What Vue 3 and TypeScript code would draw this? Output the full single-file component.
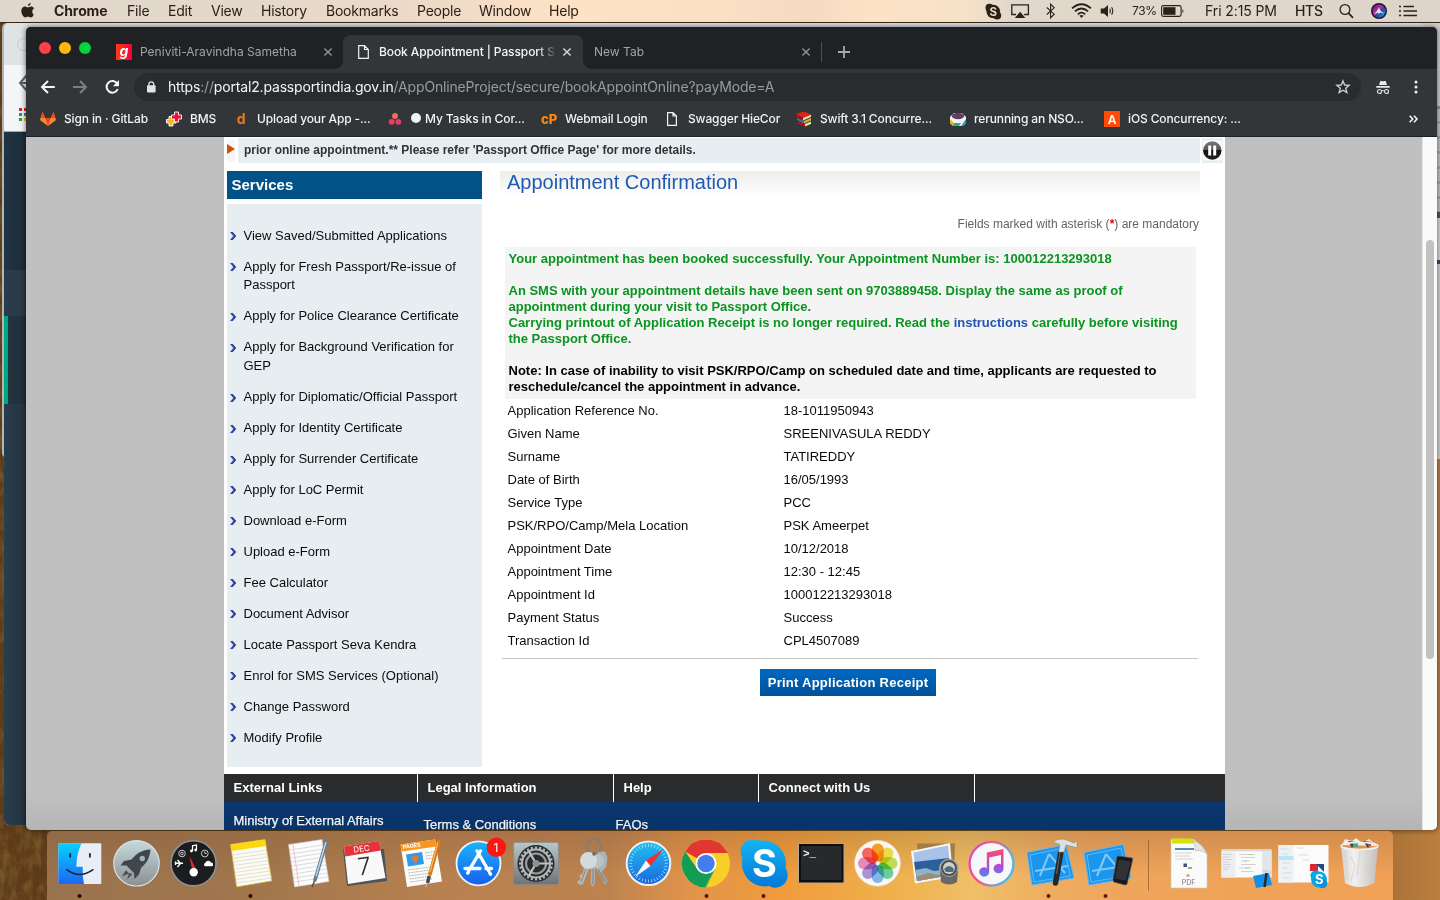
<script setup lang="ts">
interface Bookmark { icon: string; label: string }

const menus: string[] = ['Chrome', 'File', 'Edit', 'View', 'History', 'Bookmarks', 'People', 'Window', 'Help']

const bookmarks: Bookmark[] = [
  { icon: 'gitlab', label: 'Sign in · GitLab' },
  { icon: 'bms', label: 'BMS' },
  { icon: 'd', label: 'Upload your App -...' },
  { icon: 'asana', label: 'My Tasks in Cor...' },
  { icon: 'cp', label: 'Webmail Login' },
  { icon: 'doc', label: 'Swagger HieCor' },
  { icon: 'books', label: 'Swift 3.1 Concurre...' },
  { icon: 'slack', label: 'rerunning an NSO...' },
  { icon: 'a', label: 'iOS Concurrency: ...' },
]

const services: string[] = [
  'View Saved/Submitted Applications',
  'Apply for Fresh Passport/Re-issue of Passport',
  'Apply for Police Clearance Certificate',
  'Apply for Background Verification for GEP',
  'Apply for Diplomatic/Official Passport',
  'Apply for Identity Certificate',
  'Apply for Surrender Certificate',
  'Apply for LoC Permit',
  'Download e-Form',
  'Upload e-Form',
  'Fee Calculator',
  'Document Advisor',
  'Locate Passport Seva Kendra',
  'Enrol for SMS Services (Optional)',
  'Change Password',
  'Modify Profile',
]

const details: [string, string][] = [
  ['Application Reference No.', '18-1011950943'],
  ['Given Name', 'SREENIVASULA REDDY'],
  ['Surname', 'TATIREDDY'],
  ['Date of Birth', '16/05/1993'],
  ['Service Type', 'PCC'],
  ['PSK/RPO/Camp/Mela Location', 'PSK Ameerpet'],
  ['Appointment Date', '10/12/2018'],
  ['Appointment Time', '12:30 - 12:45'],
  ['Appointment Id', '100012213293018'],
  ['Payment Status', 'Success'],
  ['Transaction Id', 'CPL4507089'],
]

const petals = [
  { a: 0, c: '#ff9a12' }, { a: 45, c: '#f2dc3c' }, { a: 90, c: '#bfe046' }, { a: 135, c: '#5fcf9a' },
  { a: 180, c: '#79b8ee' }, { a: 225, c: '#a98fe0' }, { a: 270, c: '#e887c4' }, { a: 315, c: '#ff5c50' },
]
const spokes = Array.from({ length: 24 }, (_, i) => i * 15)
const ticks = Array.from({ length: 36 }, (_, i) => i * 10)
const rules = Array.from({ length: 9 }, (_, i) => i)
</script>

<template>
  <div class="desktop">
    <svg class="wallpaper" width="1440" height="900">
      <defs>
        <linearGradient id="wall" x1="0" x2="1" y1="0" y2="0">
          <stop offset="0" stop-color="#5d3a18" /><stop offset=".1" stop-color="#5d3a18" />
          <stop offset=".9" stop-color="#8a5a2a" /><stop offset="1" stop-color="#bb7f3e" />
        </linearGradient>
        <filter id="grass" x="0" y="0" width="1" height="1">
          <feTurbulence type="fractalNoise" baseFrequency=".12 .06" numOctaves="4" seed="4" />
          <feColorMatrix values="0 0 0 0 .18  0 0 0 0 .09  0 0 0 0 .02  2.6 0 0 0 -1" />
        </filter>
      </defs>
      <rect width="1440" height="900" fill="url(#wall)" />
      <rect width="60" height="900" filter="url(#grass)" />
    </svg>

    <!-- windows stacked behind the browser -->
    <div class="back-far"></div>
    <div class="back-right">
      <i class="r1"></i><i class="r2"></i><i class="r3"></i><i class="r4"></i><i class="r5"></i><i class="r6"></i>
    </div>
    <div class="back-left">
      <div class="bl-title"><span class="bl-light"></span></div>
      <div class="bl-tools">
        <svg width="22" height="67" viewBox="0 0 22 67">
          <path d="M23 10 L16 18 L23 26 M17 18H23" fill="none" stroke="#5b6066" stroke-width="2" />
          <g>
            <rect x="15" y="43" width="3" height="3" fill="#d8252a" /><rect x="20" y="43" width="3" height="3" fill="#d8252a" />
            <rect x="15" y="48" width="3" height="3" fill="#1f9a55" /><rect x="20" y="48" width="3" height="3" fill="#2f7be0" />
            <rect x="15" y="53" width="3" height="3" fill="#1f9a55" /><rect x="20" y="53" width="3" height="3" fill="#f3b717" />
          </g>
        </svg>
      </div>
      <div class="bl-s1"></div><div class="bl-s2"></div><div class="bl-s3"></div><div class="bl-s4"></div>
    </div>

    <header class="menubar">
      <nav class="menus">
        <svg class="apple" width="14" height="17" viewBox="0 0 14 17"><path d="M9.600 1c.1 1.600-1.100 3-2.700 3.100C6.800 2.600 8.100 1.200 9.600 1ZM12.700 12.400c-.7 1.600-1.600 3.100-2.900 3.100-1.100 0-1.500-.7-2.800-.7s-1.700.7-2.700.7C2.600 15.500.3 12 .3 9.100.3 6.200 2.100 4.600 4 4.600c1.200 0 2.100.8 2.900.8.700 0 1.900-.8 3.300-.8 1 0 2.200.6 2.900 1.600-2.500 1.500-2.200 5.100-.4 6.200Z" fill="#2c2017" /></svg>
        <span v-for="(m, i) in menus" :key="m" :class="['menu', { app: i === 0 }]">{{ m }}</span>
      </nav>
      <div class="status">
        <svg width="17" height="17" viewBox="0 0 17 17"><circle cx="8.300" cy="8.500" r="6.800" fill="#2c2017" /><circle cx="4.500" cy="4.700" r="4" fill="#2c2017" /><circle cx="12.200" cy="12.400" r="4" fill="#2c2017" /><text x="8.300" y="12.500" font-size="11.500" font-weight="700" text-anchor="middle" fill="#e5d9cb">S</text></svg>
        <svg width="19" height="16" viewBox="0 0 19 16"><path d="M5 11.500H.8V1.800H17.400V11.500H13.200" fill="none" stroke="#2c2017" stroke-width="1.300" /><path d="M3.800 15 9.100 8.800 14.400 15Z" fill="#2c2017" /></svg>
        <svg width="10" height="16" viewBox="0 0 10 16"><path d="M.8 4.500 8.200 11.200 4.600 14.800V1.200L8.200 4.800.8 11.500" fill="none" stroke="#2c2017" stroke-width="1.100" /></svg>
        <svg width="21" height="16" viewBox="0 0 21 16"><g fill="none" stroke="#2c2017" stroke-width="1.800"><path d="M1 5.400Q10.500-3 20 5.400" /><path d="M3.900 8.400Q10.500 2.500 17.100 8.400" /><path d="M6.800 11.300Q10.500 8 14.200 11.300" /></g><path d="M8.400 12.700Q10.500 11.300 12.600 12.700L10.500 15Z" fill="#2c2017" /></svg>
        <svg width="15" height="14" viewBox="0 0 15 14"><path d="M.7 4.500H4L8 1V13L4 9.500H.7Z" fill="#2c2017" /><path d="M9.800 4.800Q11 7 9.800 9.200M11.600 3.200Q13.900 7 11.600 10.800" fill="none" stroke="#2c2017" stroke-width="1.100" /></svg>
        <span class="pct">73%</span>
        <svg width="24" height="12" viewBox="0 0 24 12"><rect x=".6" y=".6" width="19.500" height="10.800" rx="1.800" fill="none" stroke="#2c2017" stroke-width="1.100" /><rect x="2.200" y="2.200" width="12.300" height="7.600" fill="#2c2017" /><path d="M21.500 4Q23.500 6 21.500 8Z" fill="#2c2017" /></svg>
        <span class="clock">Fri 2:15 PM</span>
        <span class="user">HTS</span>
        <svg width="15" height="16" viewBox="0 0 15 16"><circle cx="6" cy="6.500" r="4.900" fill="none" stroke="#2c2017" stroke-width="1.300" /><path d="M9.500 10.200 14 14.800" stroke="#2c2017" stroke-width="1.700" /></svg>
        <svg width="16" height="16" viewBox="0 0 16 16"><defs><linearGradient id="siri" x1="0" x2="1" y1="0" y2="1"><stop offset="0" stop-color="#3b1f78" /><stop offset=".4" stop-color="#c42b94" /><stop offset=".6" stop-color="#2848a8" /><stop offset="1" stop-color="#1dbccb" /></linearGradient></defs><circle cx="8" cy="8" r="8" fill="#1b1838" /><circle cx="8" cy="8" r="6.500" fill="url(#siri)" /><path d="M8 4.500 9.300 7.500 13.500 11 9.300 9.500 7.800 11 7 9.500 3 11.500 6 8Z" fill="#d6ecff" /></svg>
        <svg width="19" height="14" viewBox="0 0 19 14"><path d="M0 2.500H2M4.500 2.500H15M0 7H2M4.500 7H18M0 11.500H2M4.500 11.500H18" stroke="#2c2017" stroke-width="1.700" /></svg>
      </div>
    </header>

    <section class="browser">
      <div class="tabstrip">
        <div class="lights"><i class="red"></i><i class="yellow"></i><i class="green"></i></div>
        <div class="tab tab-first">
          <svg width="16" height="16" viewBox="0 0 16 16"><defs><linearGradient id="gaana" x1="0" x2="1"><stop offset="0" stop-color="#ff3a10" /><stop offset="1" stop-color="#f4003f" /></linearGradient></defs><rect width="16" height="16" fill="url(#gaana)" /><text x="8" y="11.500" font-size="14" font-weight="700" font-style="italic" text-anchor="middle" fill="#fff">g</text></svg>
          <span class="title">Peniviti-Aravindha Sametha</span>
          <svg class="close" width="8" height="8" viewBox="0 0 8 8"><path d="M.4.4 7.600 7.600M7.600.4.4 7.600" stroke="#909497" stroke-width="1.400" /></svg>
        </div>
        <div class="tab tab-active">
          <svg width="11" height="14" viewBox="0 0 11 14"><path d="M.7.700H6.500L10.300 4.500V13.300H.7ZM6.500.7V4.500H10.300" fill="none" stroke="#f1f3f4" stroke-width="1.200" /></svg>
          <span class="title active-title">Book Appointment | Passport S</span>
          <svg class="close" width="8" height="8" viewBox="0 0 8 8"><path d="M.4.400 7.600 7.600M7.600.4.4 7.600" stroke="#d5d8da" stroke-width="1.400" /></svg>
        </div>
        <div class="tab tab-new">
          <span class="title">New Tab</span>
          <svg class="close" width="8" height="8" viewBox="0 0 8 8"><path d="M.4.4 7.600 7.600M7.600.4.4 7.600" stroke="#909497" stroke-width="1.400" /></svg>
        </div>
        <svg class="plus" width="12" height="12" viewBox="0 0 12 12"><path d="M6 0V12M0 6H12" stroke="#a2abaf" stroke-width="1.800" /></svg>
      </div>

      <div class="toolbar">
        <svg width="94" height="20" viewBox="0 0 94 20">
          <g fill="none" stroke-width="2"><path d="M28.800 10H16.500M22 4 16 10 22 16" stroke="#f4f5f6" /><path d="M47 10H59.500M54 4 60 10 54 16" stroke="#7b7f82" /><path d="M91.300 6.700A5.800 5.800 0 1 0 91.800 12" stroke="#f4f5f6" /></g>
          <path d="M93 3V9.200H86.800Z" fill="#f4f5f6" />
        </svg>
        <div class="omnibox">
          <svg width="9" height="12" viewBox="0 0 9 12"><rect y="4.300" width="8.600" height="7.300" rx="1" fill="#dfe3e6" /><path d="M1.900 5V3.200A2.400 2.400 0 0 1 6.700 3.200V5" fill="none" stroke="#dfe3e6" stroke-width="1.300" /></svg>
          <span class="url"><span class="lit">https</span>://<span class="lit">portal2.passportindia.gov.in</span>/AppOnlineProject/secure/bookAppointOnline?payMode=A</span>
          <svg class="star" width="16" height="16" viewBox="0 0 16 16"><path d="M8 1.900 9.700 6 14.100 6.300 10.700 9.200 11.800 13.500 8 11.200 4.200 13.500 5.300 9.200 1.900 6.300 6.300 6Z" fill="none" stroke="#c8cdd0" stroke-width="1.400" /></svg>
        </div>
        <svg class="incog" width="14" height="15" viewBox="0 0 14 15"><path d="M3 5 4.300 1H6L7 1.500 8 1H9.700L11 5ZM.3 6H13.700V7.700H.3Z" fill="#e8eaec" /><circle cx="3.500" cy="11.500" r="2" fill="none" stroke="#d8dadc" stroke-width="1.200" /><circle cx="10.500" cy="11.500" r="2" fill="none" stroke="#d8dadc" stroke-width="1.200" /><path d="M5.500 11Q7 10 8.500 11" fill="none" stroke="#d8dadc" /></svg>
        <svg class="dots" width="4" height="14" viewBox="0 0 4 14"><circle cx="2" cy="2" r="1.500" fill="#f1f3f4" /><circle cx="2" cy="7" r="1.500" fill="#f1f3f4" /><circle cx="2" cy="12" r="1.500" fill="#f1f3f4" /></svg>
      </div>

      <div class="bookmarks">
        <div v-for="b in bookmarks" :key="b.icon" class="bm">
          <svg width="16" height="16" viewBox="0 0 16 16">
            <template v-if="b.icon === 'gitlab'"><path d="M8 15 0 9 2.500 1 5.300 7H10.700L13.500 1 16 9Z" fill="#fc8a26" /><path d="M8 15 5.200 7H10.800Z" fill="#e24329" /><path d="M2.500 1 5.200 7H.6ZM13.500 1 15.400 7H10.800Z" fill="#e8492c" /></template>
            <template v-else-if="b.icon === 'bms'"><path d="M3 5.500H7V8H10V12H7V15H3V12H.5V8.500H3Z" fill="#f6b52a" stroke="#fff" stroke-width=".9" /><path d="M8.500 1H12.500V4H15.500V8H12.500V11H8.500V8H5.500V4H8.500Z" fill="#f0103c" stroke="#fff" stroke-width=".9" /></template>
            <template v-else-if="b.icon === 'd'"><text x="8" y="13" font-size="14" font-weight="700" text-anchor="middle" fill="#ec7a14">d</text></template>
            <template v-else-if="b.icon === 'asana'"><circle cx="8" cy="5" r="2.900" fill="#fb6b5b" /><circle cx="4.700" cy="10.800" r="2.900" fill="#f23a63" /><circle cx="11.300" cy="10.800" r="2.900" fill="#e73975" /></template>
            <template v-else-if="b.icon === 'cp'"><text x="8" y="12.500" font-size="13" font-weight="800" text-anchor="middle" textLength="16" lengthAdjust="spacingAndGlyphs" fill="#ff8a0b">cP</text></template>
            <template v-else-if="b.icon === 'doc'"><path d="M3.600 1.600H9L12.400 5V14.400H3.600ZM9 1.600V5H12.400" fill="none" stroke="#f1f3f4" stroke-width="1.200" /></template>
            <template v-else-if="b.icon === 'books'"><path d="M0 3 8 .5 15 3.500 7 7Z" fill="#e02418" /><path d="M0 3 7 7V9.500L0 6Z" fill="#a80d12" /><path d="M1 7 8 10V12.500L1 9Z" fill="#2872c8" /><path d="M2 10 9 13V15.500L2 12.500Z" fill="#b41511" /><path d="M7 7 15 3.800V6L7 9.500Z" fill="#e8dcae" /><path d="M8 10 15 7V9.500L8 12.500Z" fill="#d8ad2b" /><path d="M9 13 15 10.500V13L9 15.500Z" fill="#e9deb7" /></template>
            <template v-else-if="b.icon === 'slack'"><path d="M0 6 4 2H12L16 6V12L13 15H3L0 12Z" fill="#f3f4f2" /><ellipse cx="8" cy="5" rx="6.200" ry="3.200" fill="#613e65" /><path d="M0 8 4 12V14L2 14 0 12Z" fill="#f0b429" /><path d="M4 12H11L9 15H3Z" fill="#24b36d" /><path d="M16 8V12L13 15H11Z" fill="#2198dd" /></template>
            <template v-else><rect width="16" height="16" fill="#ff4b05" /><text x="8" y="12.500" font-size="12" font-weight="600" text-anchor="middle" fill="#fff">A</text></template>
          </svg>
          <span :class="{ task: b.icon === 'asana' }"><i v-if="b.icon === 'asana'"></i>{{ b.label }}</span>
        </div>
        <svg class="more" width="9" height="8" viewBox="0 0 9 8"><path d="M.7.700 3.700 4 .7 7.300M5 .7 8 4 5 7.300" fill="none" stroke="#f1f3f4" stroke-width="1.600" /></svg>
      </div>

      <div class="viewport">
        <main class="page">
          <div class="ticker">
            <svg width="11" height="26" viewBox="0 0 11 26"><rect width="8" height="23" y="2" fill="#f5f6f7" /><path d="M0 7 8 12 0 17Z" fill="#cd5209" /></svg>
            <p>prior online appointment.** Please refer 'Passport Office Page' for more details.</p>
            <svg class="pause" width="21" height="25" viewBox="0 0 21 25"><defs><linearGradient id="pz" x1="0" x2="0" y1="0" y2="1"><stop offset="0" stop-color="#777" /><stop offset=".48" stop-color="#555" /><stop offset=".5" stop-color="#111" /><stop offset="1" stop-color="#222" /></linearGradient></defs><rect width="21" height="25" fill="#e6eef2" /><rect x="1" y="2.500" width="19" height="20" fill="#f8fafb" /><circle cx="10.300" cy="12.500" r="9.200" fill="url(#pz)" /><path d="M7.700 7.500V17.500M12.700 7.500V17.500" stroke="#fff" stroke-width="3" /></svg>
          </div>
          <div class="columns">
            <aside>
              <h2>Services</h2>
              <ul>
                <li v-for="s in services" :key="s">
                  <svg width="6" height="8" viewBox="0 0 6 8"><path d="M0 0H2.800L6.300 4 2.800 8H0L3.300 4Z" fill="#30459b" /></svg>
                  <span>{{ s }}</span>
                </li>
              </ul>
            </aside>
            <article>
              <h1>Appointment Confirmation</h1>
              <p class="mandatory">Fields marked with asterisk (<b>*</b>) are mandatory</p>
              <div class="notice">
                Your appointment has been booked successfully. Your Appointment Number is: 100012213293018<br><br>
                An SMS with your appointment details have been sent on 9703889458. Display the same as proof of<br>appointment during your visit to Passport Office.<br>
                Carrying printout of Application Receipt is no longer required. Read the <a>instructions</a> carefully before visiting<br>the Passport Office.<br><br>
                <span>Note: In case of inability to visit PSK/RPO/Camp on scheduled date and time, applicants are requested to<br>reschedule/cancel the appointment in advance.</span>
              </div>
              <dl>
                <template v-for="d in details" :key="d[0]"><dt>{{ d[0] }}</dt><dd>{{ d[1] }}</dd></template>
              </dl>
              <div class="actions"><button type="button">Print Application Receipt</button></div>
            </article>
          </div>
          <footer>
            <div class="heads"><b>External Links</b><b>Legal Information</b><b>Help</b><b>Connect with Us</b><b></b></div>
            <div class="links"><a class="mea">Ministry of External Affairs</a><a>Terms &amp; Conditions</a><a>FAQs</a></div>
          </footer>
        </main>
        <div class="scrollbar"><i></i></div>
        <div class="shade"></div>
      </div>
    </section>

    <div class="dock">
      <!-- Finder -->
      <svg class="run" viewBox="0 0 57 69">
        <defs><linearGradient id="fi" x1="0" x2="0" y1="0" y2="1"><stop offset="0" stop-color="#06d0fd" /><stop offset="1" stop-color="#1e67f4" /></linearGradient></defs>
        <rect x="7.300" y="12.300" width="43" height="40.700" rx="1" fill="#e9eef6" /><path d="M7.300 12.300H30.500Q25.500 23 25.300 35.700H31.700Q31.300 45 33 53H7.300Z" fill="url(#fi)" />
        <path d="M19.200 22.800V25.800M38.900 22.800V25.800" stroke="#162535" stroke-width="1.800" stroke-linecap="round" /><path d="M15.700 38.700Q28.500 48.500 42 38.700" fill="none" stroke="#162535" stroke-width="1.500" stroke-linecap="round" /><circle cx="28.500" cy="65" r="2" fill="#260604" />
      </svg>
      <!-- Launchpad -->
      <svg viewBox="0 0 57 69">
        <defs><linearGradient id="lp" x1="0" x2="0" y1="0" y2="1"><stop offset="0" stop-color="#c4dade" /><stop offset="1" stop-color="#8c8f91" /></linearGradient></defs>
        <circle cx="28.500" cy="32.300" r="22.700" fill="url(#lp)" stroke="#dbe4e6" stroke-width="1.200" /><path d="M42.500 18.500C34 19 29 22 23.500 28.500L16 30 12.500 34.500H18.500L26 42 26.500 48 31 43.500 33 37C39 32 42 26 42.500 18.500Z" fill="#3f474c" /><circle cx="34.300" cy="27.500" r="2.700" fill="#9db3b8" /><path d="M18 39 14 45.500 21 42.500ZM21 42 19 48.500 24.500 43Z" fill="#495155" />
      </svg>
      <!-- Dashboard -->
      <svg viewBox="0 0 57 69">
        <circle cx="28.500" cy="32.300" r="22.500" fill="#1b1c1e" stroke="#8e9294" stroke-width="1.600" /><path d="M24.500 25 31.500 39 27.500 41Z" fill="#e72828" /><circle cx="28.700" cy="41.300" r="4.200" fill="#fff" />
        <g fill="none" stroke="#c8ccce" stroke-width="1"><circle cx="17" cy="22.500" r="3.300" /><circle cx="17" cy="22.500" r="1.300" /><circle cx="39.800" cy="22.500" r="3.400" /><path d="M39.800 20.500V22.500H41.500" /></g>
        <path d="M27.500 20V14.800L31.500 14V19" stroke="#fff" stroke-width="1.200" fill="none" /><circle cx="26.500" cy="20" r="1.400" fill="#fff" /><circle cx="30.700" cy="19" r="1.400" fill="#fff" />
        <path d="M10.500 32.300H18M12.500 29 15.500 32.300 12.500 36M10.500 30.500V34" stroke="#fff" stroke-width="1.400" fill="none" /><path d="M40 35.300A2 2 0 0 1 40.500 31.700 3 3 0 0 1 46 31.500 2 2 0 0 1 47 35.300Z" fill="#fff" />
      </svg>
      <!-- Notes -->
      <svg viewBox="0 0 57 69">
        <path d="M8.500 13.500 43 8.500 50 50 14.500 56Z" fill="#fcfbf2" stroke="#c9a72d" stroke-width=".8" /><path d="M8.500 13.500 43 8.500 44.200 15 9.500 20Z" fill="#fcd811" /><g stroke="#d5d4cc" stroke-width=".7"><path v-for="r in rules" :key="r" :d="`M${10 + r * .55} ${24 + r * 3.500}L${44.800 + r * .55} ${19 + r * 3.500}`" /></g><circle cx="28.500" cy="65" r="2" fill="#260604" />
      </svg>
      <!-- TextEdit -->
      <svg viewBox="0 0 57 69">
        <path d="M9.500 13.500 43 8.500 50 50.500 15.500 56Z" fill="#fcfcfc" stroke="#c6c6c6" stroke-width=".6" /><g stroke="#c9cdd3" stroke-width=".7"><path v-for="r in rules" :key="r" :d="`M${10.500 + r * .6} ${19 + r * 4}L${44 + r * .6} ${14 + r * 4}`" /></g><path d="M14 13 20 55" stroke="#f2b5b5" stroke-width=".8" /><path d="M47.500 10 36 49" stroke="#5f7f97" stroke-width="3.600" stroke-linecap="round" /><path d="M47 11 37 45" stroke="#b8d3e4" stroke-width="1.500" /><path d="M35.500 50 33 56" stroke="#4b5157" stroke-width="1.500" />
      </svg>
      <!-- Calendar -->
      <svg viewBox="0 0 57 69">
        <path d="M7 18 11 55 51 50 48 18Z" fill="#4b5458" /><path d="M8 15.500 43 10 49.500 47 12 53Z" fill="#f9f9f9" /><path d="M8 15.500 43 10 44.800 19.500 9.300 25.500Z" fill="#e8323a" />
        <g transform="rotate(-8 26 25)"><text x="26.500" y="20.500" font-size="8" text-anchor="middle" fill="#fff">DEC</text><text x="27" y="44" font-size="24" font-weight="300" text-anchor="middle" fill="#2c2c2c">7</text></g>
      </svg>
      <!-- Pages -->
      <svg viewBox="0 0 57 69">
        <path d="M7.500 13.500 42 8.500 49 50.500 14 56Z" fill="#fbfbfa" /><path d="M7.500 13.500 42 8.500 43.200 15.500 8.800 20.500Z" fill="#fb951c" /><text x="10" y="18" font-size="5.500" font-weight="700" transform="rotate(-8 10 18)" fill="#fff">PAGES</text><path d="M13 23.500 29 21 31 33 15 35.500Z" fill="#2c9cea" /><path d="M17 26 26 24.500 23 33Z" fill="#ef7328" /><g stroke="#a9aaa9" stroke-width=".8" stroke-dasharray="2 .6"><path v-for="r in 5" :key="r" :d="`M${14 + r * .6} ${36 + r * 3}L${36 + r * .6} ${33 + r * 3}`" /><path d="M32 22 42 20.500M32.500 25 41 23.700M33 28 40 27" /></g><path d="M46 10.500 37 43" stroke="#d8791a" stroke-width="3.800" stroke-linecap="round" /><path d="M45 11 37 41" stroke="#ffbd4a" stroke-width="1.200" /><path d="M36.300 45 34.500 52" stroke="#43484c" stroke-width="3.500" /><path d="M34 52 32.500 56" stroke="#b8bcbe" stroke-width="1.200" />
      </svg>
      <!-- App Store -->
      <svg viewBox="0 0 57 69">
        <defs><linearGradient id="as" x1="0" x2="0" y1="0" y2="1"><stop offset="0" stop-color="#17b5fa" /><stop offset="1" stop-color="#1b5eec" /></linearGradient></defs>
        <circle cx="28.500" cy="32.300" r="22" fill="url(#as)" stroke="#eef3f8" stroke-width="1.800" /><g stroke="#fff" stroke-width="3.400" stroke-linecap="round"><path d="M30.500 20 19.500 38.500M27 20 38.500 39.500M15 37.500H30M36 37.500H41.500M17.700 42 18.500 40.800M39.500 41.500 40.500 43.200" /></g><circle cx="46.300" cy="16.300" r="9.700" fill="#fb1612" /><text x="46" y="20.500" font-size="12" text-anchor="middle" fill="#fff">1</text>
      </svg>
      <!-- System Preferences -->
      <svg viewBox="0 0 57 69">
        <defs><linearGradient id="sp" x1="0" x2="0" y1="0" y2="1"><stop offset="0" stop-color="#b8c7cc" /><stop offset="1" stop-color="#6d7477" /></linearGradient></defs>
        <rect x="6.500" y="11.500" width="45" height="42" rx="2" fill="url(#sp)" stroke="#87898a" stroke-width=".7" /><circle cx="29" cy="32.500" r="18.500" fill="#2b2d2e" /><circle cx="29" cy="32.500" r="14" fill="#292b2c" stroke="#b3b6b6" stroke-width="2" /><g stroke="#b3b6b6" stroke-width="2.200"><path v-for="s in spokes" :key="s" d="M29 15.500V18.500" :transform="`rotate(${s} 29 32.500)`" /></g><circle cx="29" cy="32.500" r="10" fill="none" stroke="#989b9b" stroke-width="2.200" /><g stroke="#c1c4c4" stroke-width="2.200"><path d="M29 32.500H43M29 32.500 22 20.500M29 32.500 22 44.500" /></g><circle cx="29" cy="32.500" r="3.500" fill="#8e9090" />
      </svg>
      <!-- Keychain -->
      <svg viewBox="0 0 57 69">
        <circle cx="30" cy="15.500" r="7.500" fill="none" stroke="#817d7a" stroke-width="2" /><path d="M31 31 44 50 41.500 54 39 51.500 38 47 30 36Z" fill="#9ba3a5" /><path d="M34 21 41 20.500 43.500 27 42 36 37 42 31 36Z" fill="#aab4b6" /><path d="M27 34H31V52L29 56 26.500 53Z" fill="#a9afb0" /><circle cx="33" cy="30" r="7" fill="#b9c3c5" /><path d="M20 33 25 37 19 53 16 54 13 51 17 48 15 45 19 42Z" fill="#b3b8b8" /><circle cx="24.500" cy="29.500" r="8.500" fill="#d2dada" /><path d="M29 38V53M22 38 17 51M34 38 41 50" stroke="#747b7c" stroke-width=".8" /><circle cx="30" cy="23" r="1.700" fill="#6c6664" />
      </svg>
      <!-- Safari -->
      <svg viewBox="0 0 57 69">
        <defs><linearGradient id="sa" x1="0" x2="0" y1="0" y2="1"><stop offset="0" stop-color="#22c1ef" /><stop offset="1" stop-color="#1b65dd" /></linearGradient></defs>
        <circle cx="27.500" cy="32.300" r="21.800" fill="url(#sa)" stroke="#eff1f3" stroke-width="2" /><g stroke="#c5e9fb" stroke-width=".7"><path v-for="t in ticks" :key="t" d="M27.500 13V16" :transform="`rotate(${t} 27.500 32.300)`" /></g><path d="M42.500 18 25 29.500 29.500 35Z" fill="#f32e35" /><path d="M14 46 25 29.500 29.500 35Z" fill="#f4f7f8" />
      </svg>
      <!-- Chrome -->
      <svg viewBox="0 0 57 69">
        <circle cx="28" cy="32.500" r="24" fill="#f8cf28" /><path d="M28 32.500 7.200 20.500A24 24 0 0 1 48.800 20.500L50 22H28Z" fill="#e23731" /><path d="M7.200 20.500A24 24 0 0 0 28 56.500L37.100 37.500 28 43 18.900 37.500Z" fill="#129d57" /><path d="M27 56.500 37.100 37.500" stroke="#76a83a" /><circle cx="28" cy="32.500" r="10.500" fill="#fff" /><circle cx="28" cy="32.500" r="8.700" fill="#427fed" /><circle cx="28.500" cy="65" r="2" fill="#571507" />
      </svg>
      <!-- Skype -->
      <svg viewBox="0 0 57 69">
        <defs><linearGradient id="sk" x1="0" x2="0" y1="0" y2="1"><stop offset="0" stop-color="#14b4f3" /><stop offset="1" stop-color="#0479d7" /></linearGradient></defs>
        <g fill="url(#sk)"><path d="M5.500 20A12.500 12.500 0 0 1 24 9.800 23 23 0 0 1 50.500 37 12.500 12.500 0 0 1 34 55 23 23 0 0 1 7.500 27 12.500 12.500 0 0 1 5.500 20Z" /></g><text x="29.500" y="46" font-size="38" font-weight="700" text-anchor="middle" fill="#fff">S</text><circle cx="28.500" cy="65" r="2" fill="#571507" />
      </svg>
      <!-- Terminal -->
      <svg viewBox="0 0 57 69">
        <rect x="6" y="12.300" width="46.500" height="40" rx="1.500" fill="#b8aa98" /><rect x="7" y="13" width="44.500" height="38.500" fill="#0e0f10" /><rect x="9" y="15" width="40.500" height="34" fill="#28292a" /><text x="11" y="25.500" font-size="11" font-weight="700" class="mono" fill="#f7f7f7">&gt;_</text>
      </svg>
      <!-- Photos -->
      <svg viewBox="0 0 57 69">
        <circle cx="28.500" cy="32.300" r="23" fill="#f8f7f3" stroke="#ddd4c7" stroke-width=".6" /><g class="petals"><rect v-for="p in petals" :key="p.a" x="22.700" y="12.600" width="12" height="18" rx="6" :fill="p.c" fill-opacity=".92" :transform="`rotate(${p.a} 28.700 32.300)`" /></g>
      </svg>
      <!-- Preview -->
      <svg viewBox="0 0 57 69">
        <path d="M11 12.500H49L48 46H14Z" fill="#a47c48" /><path d="M5 20 44 12 47 46 9 52.500Z" fill="#f5f5f1" /><path d="M7.500 21.500 42 14.500 45 44 11 50Z" fill="#a9c2e8" /><path d="M8 31 43 27 45 44 11 50Z" fill="#2c5f9e" /><path d="M9.500 39 20 37 28 40 45 38V44L11 50Z" fill="#8fb3c8" /><path d="M10.500 46 22 42 33 44 45 41V44L11 50Z" fill="#a08c72" /><circle cx="43" cy="37.500" r="9.200" fill="#595b5b" stroke="#b7b2aa" stroke-width="1.300" /><path d="M34 40H52L51 51Q43 56 35 51Z" fill="#686868" /><circle cx="43" cy="37" r="8.500" fill="#4c4e4f" stroke="#a8a6a2" /><circle cx="43" cy="37" r="6" fill="#d3d1c6" /><path d="M38 38Q43 32 48 38L47 41H40Z" fill="#4c6d84" />
      </svg>
      <!-- iTunes -->
      <svg viewBox="0 0 57 69">
        <defs><linearGradient id="it" x1="0" x2="1" y1="0" y2=".4"><stop offset="0" stop-color="#d83ee4" /><stop offset=".45" stop-color="#fb5480" /><stop offset="1" stop-color="#48b8f0" /></linearGradient><linearGradient id="in" x1="0" x2="0" y1="0" y2="1"><stop offset="0" stop-color="#fb4b70" /><stop offset=".65" stop-color="#b04bdc" /><stop offset="1" stop-color="#468fea" /></linearGradient></defs>
        <circle cx="28.500" cy="32.700" r="21.900" fill="#f8f7f8" stroke="url(#it)" stroke-width="2.300" /><path d="M23.800 21.500 40.500 18V37.500A5 4.700 0 1 1 38 33.500V24L26.200 26.500V41A5 4.700 0 1 1 23.800 37Z" fill="url(#in)" />
      </svg>
      <!-- Xcode -->
      <svg viewBox="0 0 57 69">
        <path d="M7 21.500 46 13.500 54 47 12 54Z" fill="#1a96ee" stroke="#62b7ef" /><g fill="none" stroke="#80c9f4"><path d="M10 24 44 17 50.500 45 14 51Z" stroke-width=".7" /><path d="M29 23 20 45M29 23 45 42M15 40 48 35" stroke-width="2" /></g><path d="M41 20 35.500 52" stroke="#252729" stroke-width="5.500" stroke-linecap="round" /><path d="M40.500 19 36.500 43" stroke="#68696a" stroke-width="1" /><path d="M33 11Q40 6 48 9.500L54 12 57 10V17L52 15.500 46 14 44 21H38.500L40 13.500Z" fill="#dedfe0" stroke="#8b8988" stroke-width=".6" /><circle cx="28.500" cy="65" r="2" fill="#651b0a" />
      </svg>
      <!-- Simulator -->
      <svg viewBox="0 0 57 69">
        <path d="M7 21.500 46 13.500 54 47 12 54Z" fill="#1a96ee" stroke="#62b7ef" /><g fill="none" stroke="#80c9f4"><path d="M10 24 44 17 50.500 45 14 51Z" stroke-width=".7" /><path d="M29 23 20 45M29 23 45 42M15 40 48 35" stroke-width="2" /></g><path d="M41 25 55 27Q56 27 55.500 29L50 53Q49 54 48 54L37 51Q36 50 36 49L40 26Z" fill="#17191b" stroke="#515253" stroke-width=".7" /><path d="M41.500 28.500 53.500 30.500 49 49.500 38 47.500Z" fill="#303235" /><circle cx="28.500" cy="65" r="2" fill="#651b0a" />
      </svg>
      <i class="sep"></i>
      <!-- PDF -->
      <svg viewBox="0 0 57 69">
        <path d="M11 8.500H34L47 22V57H11Z" fill="#fafafa" stroke="#cbcbcb" stroke-width=".6" /><path d="M12 7.500H31L36 12.500H12Z" fill="#d2e40c" /><path d="M33 9Q36 13 35 20 41 18 47 23 43 13 33 9Z" fill="#e5e5e5" stroke="#aaa" stroke-width=".5" /><path d="M15 18H34" stroke="#315d9a" stroke-width="1.500" /><path d="M15 22H32M15 25H30M15 28H33" stroke="#d2d2d2" /><rect x="23.500" y="32.500" width="3.500" height="3.500" fill="#3e5674" /><rect x="28" y="36" width="4" height="2" fill="#7eb892" /><rect x="26.500" y="43.500" width="3" height="2" fill="#d8895a" /><text x="28.500" y="54" font-size="7" text-anchor="middle" fill="#777">PDF</text>
      </svg>
      <!-- minimised Xcode window -->
      <svg viewBox="0 0 57 69">
        <rect x="4.500" y="18.500" width="50" height="28" fill="#fafafa" /><rect x="4.500" y="18.500" width="50" height="1.800" fill="#d7d7d7" /><rect x="4.500" y="20.300" width="14" height="26" fill="#ecedee" /><path d="M6 23.500H15M6 26H13M6 28.500H15M6 31H12M6 33.500H14M6 36H13M6 38.500H11" stroke="#ccced1" stroke-width=".8" /><path d="M22 23.500H34M24 26.500H38M24 30H33M24 33.500H39M22 37H31M24 40.500H36" stroke="#dcc4d2" stroke-width=".9" /><path d="M30 23.500H37M27 30H30M28 37H34" stroke="#9fcf9f" stroke-width=".9" /><rect x="45" y="20.300" width="9.500" height="26" fill="#e3e6e9" /><path d="M36 45 52 42 55 54 39 57Z" fill="#158ee9" /><path d="M49.500 42 47.500 56" stroke="#27292b" stroke-width="2.500" /><path d="M45.500 41Q50 38.500 55 42" fill="none" stroke="#d5d5d5" stroke-width="2" />
      </svg>
      <!-- minimised Skype window -->
      <svg viewBox="0 0 57 69">
        <rect x="4.500" y="14" width="50" height="37.500" fill="#fbfbfb" /><rect x="4.500" y="14" width="15" height="37.500" fill="#eef2f5" /><rect x="4.500" y="25" width="15" height="4" fill="#b4e6f7" /><path d="M6 18H15M8 23H14M8 32H16M8 37H14M8 42H17M8 47H15" stroke="#d3d9dd" stroke-width="1" /><path d="M23 17H30M25 24H34M29 29H35" stroke="#dcdcdc" stroke-width="1.200" /><path d="M36 33H44V40H36Z" fill="#dc2730" /><path d="M42 33H50V41Z" fill="#24497a" /><circle cx="45" cy="48.500" r="8" fill="#08a7ea" /><circle cx="41.500" cy="44.500" r="5" fill="#08a7ea" /><circle cx="48.500" cy="52.500" r="4.800" fill="#0791dc" /><text x="45.200" y="53" font-size="13" font-weight="700" text-anchor="middle" fill="#fff">S</text>
      </svg>
      <!-- Trash -->
      <svg viewBox="0 0 57 69">
        <defs><linearGradient id="tr" x1="0" x2="1"><stop offset="0" stop-color="#d3d1cf" /><stop offset=".35" stop-color="#f2f1ef" /><stop offset="1" stop-color="#c2bfbc" /></linearGradient></defs>
        <path d="M11 14 14 8 21 10 25 7 31 12 38 8 46 15Z" fill="#edecea" /><path d="M17 10 21 17 25 11ZM32 10 37 17 41 11Z" fill="#444" /><path d="M22 12H27V16H22Z" fill="#41a891" /><path d="M37 11H40V15H37Z" fill="#b65251" /><path d="M10 15Q28 21 47 15L43.500 52Q28.500 60 14 52Z" fill="url(#tr)" /><ellipse cx="28.500" cy="15" rx="18.500" ry="3.500" fill="none" stroke="#f0efed" stroke-width="1.500" /><path d="M14 21 17 49M20 26 24 35 20 50M40 22 35 35 38 48M29 21 26 45" stroke="#d4d2d0" stroke-width=".9" fill="none" />
      </svg>
    </div>
  </div>
</template>

<style>
body { margin: 0; overflow: hidden; }
</style>

<style scoped>
.desktop { position: relative; width: 1440px; height: 900px; overflow: hidden; font-family: Inter, "Liberation Sans", sans-serif; }
.desktop svg { display: block; flex: none; overflow: visible; }
.wallpaper { position: absolute; inset: 0; }
p, h1, h2, ul, dl, dd { margin: 0; padding: 0; }

.menubar { position: absolute; inset: 0 0 auto; height: 22px; display: flex; background: linear-gradient(90deg, #dfd7cd 0, #e5d8ca 260px, #eedac7 440px, #fde2c5 560px, #fbe0c4 720px, #f4dac1 810px, #fde3c5 870px, #f6e1c8 970px, #e1d8cc 1010px, #ddd5ca 1440px); border-bottom: 1px solid #3a2814; color: #2c2017; font-size: 14px; line-height: 22px; }
.menus { flex: none; width: 985px; display: grid; grid-template-columns: 54px 73px 41px 43px 50px 65px 91px 62px 70px auto; white-space: nowrap; letter-spacing: -.22px; }
.apple { margin: 2px 0 0 21px; }
.app { font-weight: 700; letter-spacing: -.1px; }
.status { display: grid; grid-template-columns: 26px 35px 25px 29px 32px 29px 44px 90px 44px 32px 28px 41px; align-items: center; white-space: nowrap; letter-spacing: -.1px; }
.pct { font-size: 12px; letter-spacing: -.4px; }
.user { font-weight: 500; letter-spacing: -.3px; }

.back-far { position: absolute; left: 2px; top: 23px; width: 40px; height: 435px; background: #aeb6bb; border-radius: 5px; }
.back-left { position: absolute; left: 4px; top: 23px; width: 1420px; height: 802px; border-radius: 5px; overflow: hidden; background: #d3d6d8; }
.bl-title { height: 42px; background: #dfe3e6; overflow: hidden; }
.bl-light { display: block; width: 11px; height: 11px; margin: 15px 0 0 13px; border: 1px solid #c3c7ca; border-radius: 50%; }
.bl-tools { height: 67px; background: #f4f5f6; border-bottom: 1px solid #aaa; box-sizing: border-box; }
.bl-s1 { height: 138px; background: linear-gradient(90deg, #203443, #1c2d39 22px); }
.bl-s2 { height: 46px; background: linear-gradient(90deg, #2a3c4c, #293947 22px); }
.bl-s3 { height: 88px; background: linear-gradient(90deg, #243440, #202d37 22px); border-left: 4px solid #00a782; }
.bl-s4 { height: 421px; background: linear-gradient(90deg, #293d4e, #243441 22px); }
.back-right { position: absolute; left: 1415px; top: 23px; width: 25px; height: 436px; background: #d5d5d4; display: flex; flex-direction: column; align-items: flex-end; }
.back-right i { width: 3px; flex: none; }
.r1 { height: 83px; background: #d0d0d0; }
.r2 { height: 3px; background: #929292; }
.r3 { height: 103px; background: repeating-linear-gradient(#c4c4c4 0 12px, #a8a8a8 12px 15px); }
.r4 { height: 6px; background: #555; }
.r5 { height: 42px; background: #d9dcdc; }
.r6 { height: 4px; background: #264f82; }

.browser { position: absolute; left: 26px; top: 27px; width: 1411px; height: 802.5px; border-radius: 5px; overflow: hidden; display: flex; flex-direction: column; background: #323639; box-shadow: 0 0 5px 1px rgba(0, 0, 0, .45); }
.tabstrip { height: 42px; flex: none; background: #202124; display: flex; }
.lights { width: 80px; display: flex; gap: 8px; padding: 15px 0 0 13px; box-sizing: border-box; }
.lights i { width: 12px; height: 12px; border-radius: 50%; }
.red { background: #ff4147; }
.yellow { background: #fdb80b; }
.green { background: #05d33d; }
.tab { position: relative; display: flex; align-items: center; height: 34px; margin-top: 8px; box-sizing: border-box; font-size: 12px; color: #9ba7ab; white-space: nowrap; }
.tab .title { margin-left: 8px; margin-top: -1px; letter-spacing: .01px; }
.tab .close { margin-left: auto; }
.tab-first { width: 237px; padding: 0 11px 0 10px; }
.tab-active { width: 240px; padding: 0 12px 0 15px; background: #323639; border-radius: 8px 8px 0 0; color: #f4f5f6; }
.tab-active::before, .tab-active::after { content: ""; position: absolute; bottom: 0; width: 8px; height: 8px; }
.tab-active::before { left: -8px; background: radial-gradient(circle at 0 0, transparent 7.500px, #323639 8px); }
.tab-active::after { right: -8px; background: radial-gradient(circle at 100% 0, transparent 7.500px, #323639 8px); }
.tab-active .active-title { width: 177px; margin-left: 10px; font-weight: 500; letter-spacing: -.1px; -webkit-mask-image: linear-gradient(90deg, #000 158px, transparent 178px); mask-image: linear-gradient(90deg, #000 158px, transparent 178px); }
.tab-new { width: 238px; padding: 0 11px 0 3px; }
.tab-new::after { content: ""; position: absolute; right: -1px; top: 7px; width: 1px; height: 20px; background: #4d5154; }
.plus { margin: 19px 0 0 17px; }

.toolbar { height: 36px; flex: none; display: flex; align-items: center; }
.omnibox { display: flex; align-items: center; width: 1227px; height: 28px; margin-left: 14px; border-radius: 14px; background: #282c2f; box-sizing: border-box; padding: 0 10px 0 13px; }
.url { margin-left: 12px; margin-top: -1px; font-size: 14px; letter-spacing: -.17px; color: #939da2; white-space: nowrap; }
.lit { color: #f4f5f6; }
.star { margin-left: auto; }
.incog { margin-left: 15px; }
.dots { margin-left: 24px; }

.bookmarks { height: 32px; flex: none; display: grid; grid-template-columns: 126px 67px 154px 154px 123px 132px 154px 154px 305px auto; align-items: center; padding: 0 0 4px 14px; border-bottom: 1px solid #1e2023; box-sizing: border-box; color: #f1f3f4; font-size: 12px; font-weight: 500; letter-spacing: -.13px; }
.bm { display: flex; align-items: center; gap: 8px; white-space: nowrap; }
.bm span { margin-top: -1px; }
.task { display: flex; align-items: center; gap: 4px; }
.task i { width: 10px; height: 10px; border-radius: 50%; background: #f1f3f4; }

.viewport { position: relative; flex: 1; min-height: 0; background: #c0c0c0; display: flex; justify-content: space-between; padding-left: 198px; font-family: "Liberation Sans", Arial, sans-serif; }
.shade { position: absolute; inset: auto 15px 0 0; height: 35px; background: linear-gradient(transparent, rgba(0, 0, 0, .06)); }
.page { width: 1001px; background: #fff; overflow: hidden; display: flex; flex-direction: column; }
.ticker { height: 26px; flex: none; display: flex; padding-left: 3px; }
.ticker p { width: 962px; height: 25px; margin-top: 1px; padding-left: 6px; box-sizing: border-box; background: #e6eef2; color: #333; font-size: 12px; font-weight: 700; line-height: 24px; }
.pause { margin: 1px 0 0 2px; }
.columns { height: 611px; flex: none; display: flex; padding: 8px 0 0 3px; box-sizing: border-box; }
aside { width: 255px; }
h2 { height: 28px; padding-left: 4.500px; background: #005288; color: #fff; font-size: 15px; line-height: 28px; }
ul { height: 563px; margin-top: 5px; padding: 22.600px 3px 0; box-sizing: border-box; background: #e6eef2; list-style: none; font-size: 13px; line-height: 18.900px; color: #0b0b0b; }
li { display: flex; gap: 7.500px; margin-bottom: 12.050px; padding-right: 8px; }
li svg { margin-top: 5.400px; }
article { width: 700px; margin-left: 18px; }
h1 { height: 25px; padding-left: 7px; background: linear-gradient(#ececec, #fff); color: #1f5ab2; font-size: 20px; font-weight: 400; line-height: 22px; }
.mandatory { margin: 19px 1px 0 0; height: 32px; text-align: right; font-size: 12px; line-height: 18px; color: #636363; }
.mandatory b { color: #e00; font-weight: 700; }
.notice { width: 691px; height: 152px; margin-left: 5px; padding: 4px 0 0 3.500px; box-sizing: border-box; background: #f4f4f4; color: #0a9420; font-size: 13px; font-weight: 700; line-height: 16px; white-space: nowrap; }
.notice a { color: #2456ae; }
.notice span { color: #000; }
dl { display: grid; grid-template-columns: 276px auto; margin-left: 7.500px; font-size: 13px; line-height: 23px; color: #0a0a0a; }
.actions { margin: 6px 2px 0; padding-top: 10px; border-top: 1px solid #c6c6c6; text-align: center; }
.actions button { width: 176px; height: 27px; margin-right: 4px; padding: 0; border: 0; background: linear-gradient(#0069c4, #005197); color: #fff; font: 700 13px "Liberation Sans", Arial, sans-serif; letter-spacing: .26px; white-space: nowrap; }
footer { flex: 1; background: #09376f; color: #fff; }
.heads { height: 28px; display: grid; grid-template-columns: 194px 196px 145px 216px auto; background: #292b2d; font-size: 13px; line-height: 27px; }
.heads b { padding-left: 9.500px; box-sizing: border-box; border-right: 1px solid #fff; }
.heads b:last-child { border: 0; }
.links { display: grid; grid-template-columns: 190px 192px auto; padding: 14px 0 0 9.500px; font-size: 13px; line-height: 18px; -webkit-text-stroke: .25px #fff; }
.mea { margin-top: -4px; }
.scrollbar { width: 15px; background: #fafafa; border-left: 1px solid #e4e4e4; box-sizing: border-box; }
.scrollbar i { display: block; width: 8px; height: 419px; margin: 103px 0 0 3px; border-radius: 4px; background: #c1c1c1; }

.dock { position: absolute; left: 47px; top: 831px; width: 1346px; height: 69px; padding-left: 3.500px; box-sizing: border-box; display: flex; border-radius: 5px 5px 0 0; background: linear-gradient(180deg, rgba(120, 75, 45, .25), transparent 65%), linear-gradient(90deg, #9a734e 0, #a0764d 200px, #b8814f 400px, #bc8350 560px, #e0934a 640px, #f09b3c 730px, #efb14c 850px, #efc067 925px, #efad61 1000px, #efa55b 1080px, #f0a156 1346px); }
.dock > svg { width: 57px; height: 69px; font-family: Inter, "Liberation Sans", sans-serif; }
.mono { font-family: "Liberation Mono", monospace; }
.petals rect { mix-blend-mode: multiply; }
.sep { flex: none; width: 1px; height: 51px; margin: 9px 11.500px 0 14px; background: rgba(110, 60, 20, .5); }
</style>
